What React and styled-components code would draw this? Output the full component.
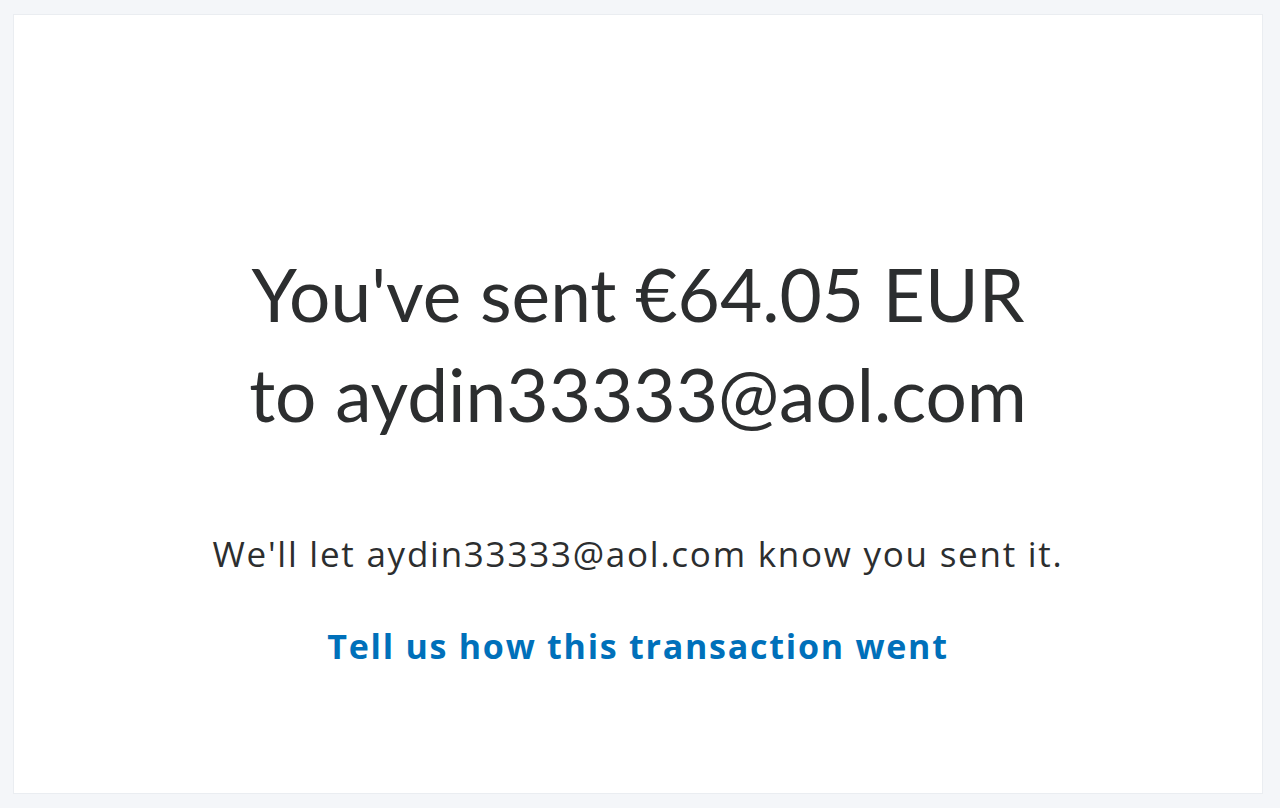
import React from "react";
import styled, { createGlobalStyle } from "styled-components";

const GlobalStyle = createGlobalStyle`
  html, body {
    margin: 0;
    padding: 0;
    background: #f4f6f9;
  }
  body {
    font-family: Lato, "Noto Sans", sans-serif;
  }
`;

const Page = styled.div`
  box-sizing: border-box;
  width: 1280px;
  height: 808px;
  padding: 14px 17px 14px 13px;
  display: flex;
`;

const Card = styled.main`
  flex: 1;
  background: #ffffff;
  border: 1px solid #eaedf1;
  display: flex;
  flex-direction: column;
  align-items: center;
  justify-content: center;
  text-align: center;
  padding-top: 104px;
`;

const Title = styled.h1`
  margin: 0;
  font-size: 73px;
  line-height: 100px;
  font-weight: 400;
  color: #2c2e2f;
`;

const Note = styled.p`
  margin: 88px 0 0;
  font-family: "Open Sans", Lato, sans-serif;
  font-size: 35px;
  letter-spacing: 1.75px;
  line-height: 44px;
  color: #2c2e2f;
`;

const FeedbackLink = styled.a`
  margin-top: 48px;
  font-family: "Open Sans", Lato, sans-serif;
  font-size: 34px;
  letter-spacing: 1.75px;
  line-height: 44px;
  font-weight: 700;
  color: #0070ba;
  text-decoration: none;
`;

export default function App() {
  return (
    <>
      <GlobalStyle />
      <Page>
        <Card>
          <Title>
            You've sent €64.05 EUR
            <br />
            to aydin33333@aol.com
          </Title>
          <Note>We'll let aydin33333@aol.com know you sent it.</Note>
          <FeedbackLink href="#">Tell us how this transaction went</FeedbackLink>
        </Card>
      </Page>
    </>
  );
}
